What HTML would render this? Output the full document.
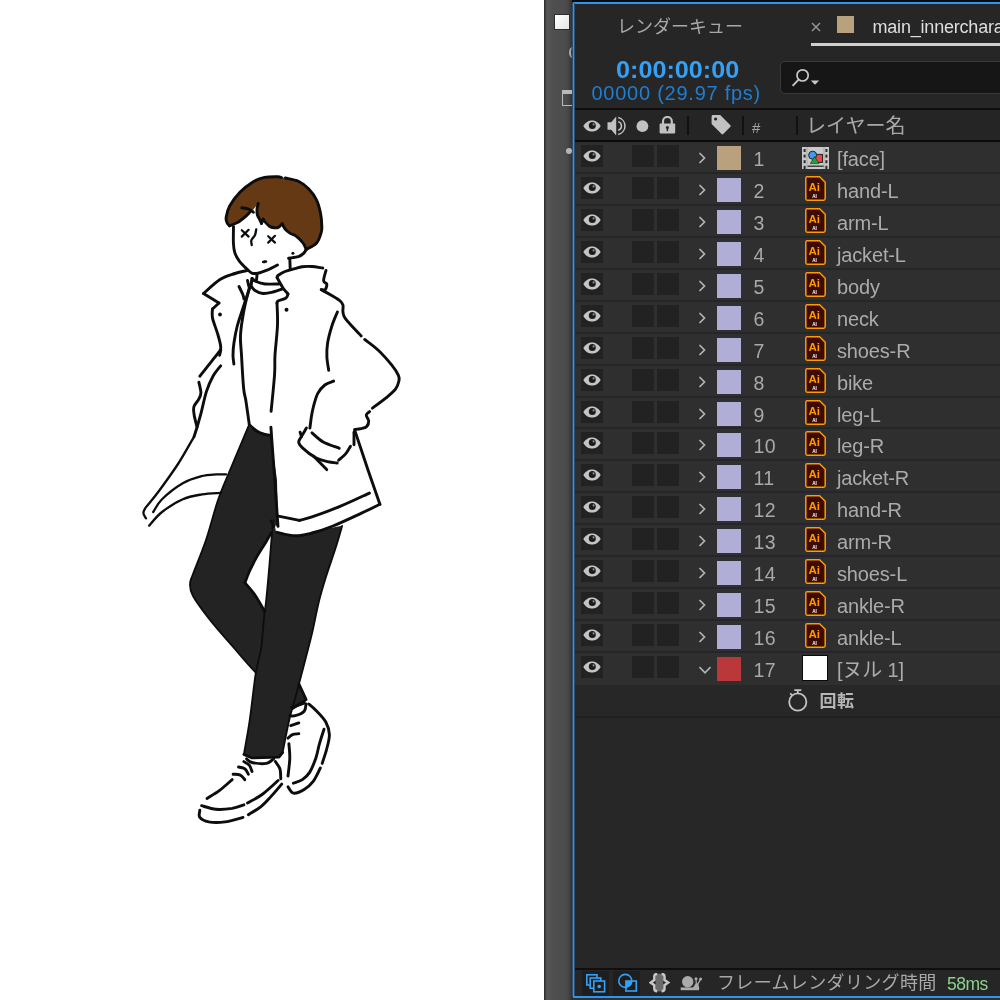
<!DOCTYPE html>
<html lang="ja"><head><meta charset="utf-8"><title>After Effects timeline</title>
<style>
html,body{margin:0;padding:0;}
body{width:1000px;height:1000px;overflow:hidden;background:#fff;position:relative;font-family:"Liberation Sans","Noto Sans CJK JP",sans-serif;}
#canvas{position:absolute;left:0;top:0;width:544px;height:1000px;background:#fff;overflow:hidden;}
#canvas svg{position:absolute;left:0;top:0;}
#strip{position:absolute;left:544px;top:0;width:29px;height:1000px;background:linear-gradient(90deg,#2f2f2f 0px,#333 1px,#545454 2.5px,#555 5px,#4f4f4f 8px,#4d4d4d 20px,#474747 24px,#383838 27px,#2a2a2a 28.5px);}
#strip .sq{position:absolute;left:10px;top:14px;width:14px;height:14px;background:linear-gradient(135deg,#fff,#e4e4e4);border:1px solid #2c2c2c;box-sizing:content-box;}
#strip .paren{position:absolute;left:24.5px;top:47px;width:8px;height:11px;border-radius:50%;border-left:2px solid #a9a9a9;box-sizing:border-box;}
#strip .box{position:absolute;left:18px;top:90px;width:12px;height:16px;border:1.5px solid #b9b9b9;border-top:4px solid #b9b9b9;box-sizing:border-box;}
#strip .dot{position:absolute;left:21.5px;top:148px;width:6px;height:6px;border-radius:50%;background:#b5b5b5;}
#panel{position:absolute;left:572px;top:0;width:428px;height:1000px;background:#262626;overflow:hidden;will-change:transform;}
#panel .abs{position:absolute;}
#topblack{position:absolute;left:0;top:0;width:428px;height:2px;background:#0c0c0c;}
#bl-top{position:absolute;left:1px;top:2px;width:427px;height:2px;background:#2e93f3;}
#bl-left{position:absolute;left:0px;top:3px;width:3px;height:994px;background:linear-gradient(90deg,#2b5177 0 1px,#2e93f3 1px 2px,#294f75 2px 3px);}
#bl-bot{position:absolute;left:1px;top:996px;width:427px;height:2px;background:#2e93f3;}
#below{position:absolute;left:0;top:998px;width:428px;height:2px;background:#303030;}
.tab1{position:absolute;left:45px;top:14px;font-size:18px;line-height:26px;color:#a8a8a8;white-space:nowrap;letter-spacing:0;}
.tabx{position:absolute;left:238px;top:21px;}
.tabsq{position:absolute;left:265px;top:16px;width:17px;height:17px;background:#b8a17c;}
.tab2{position:absolute;left:300.5px;top:14px;font-size:18px;line-height:26px;color:#dedede;white-space:nowrap;letter-spacing:-0.2px;}
.tabul{position:absolute;left:239px;top:43px;width:200px;height:3px;background:#cfcfcf;}
.tc{position:absolute;left:43.5px;top:55px;font-size:24px;line-height:30px;font-weight:bold;color:#34a0f6;white-space:nowrap;transform:scaleX(1.05);transform-origin:0 0;}
.fps{position:absolute;left:19.5px;top:81px;font-size:20px;line-height:24px;color:#1e7ed4;white-space:nowrap;letter-spacing:0.75px;}
.search{position:absolute;left:207.5px;top:61px;width:240px;height:33px;box-sizing:border-box;background:#161616;border:1px solid #393939;border-radius:5px;}
.hline1{position:absolute;left:3px;top:108px;width:425px;height:2px;background:#0e0e0e;}
.hdr{position:absolute;left:3px;top:110px;width:425px;height:30px;background:#252525;}
.hline2{position:absolute;left:3px;top:140px;width:425px;height:2px;background:#0a0a0a;}
.hsep{position:absolute;top:116px;width:2px;height:19px;background:#111;}
.hnum{position:absolute;left:180px;top:116px;font-size:15px;line-height:24px;color:#a5a5a5;}
.hname{position:absolute;left:234px;top:112px;font-size:20px;line-height:28px;color:#a9a9a9;white-space:nowrap;}
.row{position:absolute;left:3px;width:425px;height:32px;background:#2f2f2f;box-shadow:inset 0 -2px 0 #262626;}
.cell{position:absolute;top:3px;width:22px;height:22px;background:#222;}
.c1{left:6px;}.c3{left:57px;}.c4{left:82px;}
.eye{position:absolute;left:2px;top:5px;width:18px;height:12px;}
.chev{position:absolute;left:121px;top:10px;width:12px;height:12px;}
.lab{position:absolute;left:142px;top:3.5px;width:24px;height:24px;}
.num{position:absolute;left:178.5px;top:3px;font-size:19.5px;letter-spacing:0.4px;line-height:28px;color:#a9a9a9;white-space:nowrap;}
.ai{position:absolute;left:230px;top:2px;width:21px;height:25px;}
.ait{font-family:"Liberation Sans",sans-serif;font-weight:bold;font-size:11.5px;fill:#ff9a00;text-anchor:middle;}
.ais{font-family:"Liberation Sans",sans-serif;font-weight:bold;font-size:4.6px;fill:#fff;text-anchor:middle;}
.comp{position:absolute;left:226.5px;top:5px;width:27px;height:22px;}
.nullico{position:absolute;left:227px;top:2px;width:24px;height:24px;background:#fff;border:1.5px solid #0a0a0a;}
.name{position:absolute;left:262px;top:3px;font-size:20px;line-height:28px;color:#ababab;white-space:nowrap;letter-spacing:-0.15px;}
.prop{position:absolute;left:3px;top:685px;width:425px;height:31px;background:#272727;border-bottom:2px solid #1f1f1f;}
.sw{position:absolute;left:212.5px;top:2.5px;width:20px;height:24px;}
.pname{position:absolute;left:244.5px;top:3.5px;font-size:17px;line-height:26px;font-weight:bold;color:#b6b6b6;white-space:nowrap;letter-spacing:0.6px;font-family:"Liberation Sans","Noto Sans CJK JP",sans-serif;}
#empty{position:absolute;left:3px;top:718px;width:425px;height:250px;background:#272727;}
.bline{position:absolute;left:3px;top:967.5px;width:425px;height:2px;background:#0f0f0f;}
.bbar{position:absolute;left:3px;top:969.5px;width:425px;height:26.5px;background:#262626;}
.bbtn{position:absolute;top:971px;height:25px;width:27px;background:#1e1e1e;}
.btxt{position:absolute;left:145px;top:971px;font-size:18px;line-height:24px;color:#a8a8a8;white-space:nowrap;letter-spacing:0.35px;}
.bms{position:absolute;left:375px;top:971.5px;font-size:17.5px;line-height:24px;color:#8cd08c;white-space:nowrap;letter-spacing:-0.5px;}

</style></head>
<body>
<div id="canvas">
<svg width="544" height="1000" viewBox="0 0 544 1000">
<path d="M248.4 426.4 C247.3 428.9 245.2 434.0 242.0 441.6 C238.8 449.2 233.2 462.3 229.2 472.0 C225.2 481.7 221.9 488.7 218.0 500.0 C214.1 511.3 210.2 527.7 206.0 540.0 C201.8 552.3 195.7 566.7 193.0 574.0 C190.3 581.3 190.0 580.3 190.0 584.0 C190.0 587.7 189.7 590.0 193.0 596.0 C196.3 602.0 203.2 611.3 210.0 620.0 C216.8 628.7 228.0 641.0 234.0 648.0 C240.0 655.0 242.3 657.8 246.0 662.0 C249.7 666.2 254.3 671.2 256.0 673.0 L259 665 L261.4 646.8 L264.8 611.6 L260 603.2 L254 593.6 L245 582.8 L249.2 572 L256.4 557.6 L266 542 L271.4 532.4 L272.6 525 L278 526 L277 480 L272.4 448 L270.8 435.2 L258 432 Z" fill="#232323" stroke="none"/>
<path d="M298.0 680.0 L306.2 699.6 L292.4 708.6 L289.0 708.0Z" fill="#232323" stroke="none"/>
<path d="M273.6 520.5 C273.4 521.4 273.1 521.4 272.6 526.0 C272.1 530.6 271.5 539.5 270.8 548.0 C270.1 556.5 269.2 567.8 268.4 576.8 C267.6 585.8 266.7 595.5 266.0 602.0 C265.3 608.5 265.0 608.5 264.2 616.0 C263.4 623.5 262.3 639.7 261.4 646.8 C260.5 653.9 259.8 653.8 258.8 658.8 C257.8 663.8 256.7 666.4 255.2 676.8 C253.7 687.2 251.5 708.1 249.6 721.0 C247.7 733.9 244.8 748.8 243.9 754.4 L252 758 L279 757.1 L282.6 752.6 C283.7 747.3 287.0 729.8 289.0 721.0 C291.0 712.2 293.0 706.2 294.8 699.6 C296.6 693.0 297.6 689.2 299.6 681.6 C301.6 674.0 304.6 662.6 306.8 654.0 C309.0 645.4 310.8 638.7 312.8 630.0 C314.8 621.3 316.6 610.9 318.8 602.0 C321.0 593.1 323.2 585.8 326.0 576.8 C328.8 567.8 332.9 556.5 335.6 548.0 C338.3 539.5 341.1 529.5 342.2 525.8 L320 530 L302 535.4 L287.6 535.4 L276.2 532.4 Z" fill="#232323" stroke="none"/>
<path d="M229.4 225.8 C229.0 225.2 227.5 224.0 227.0 222.5 C226.5 221.0 225.7 219.8 226.2 217.0 C226.7 214.2 227.5 209.9 229.8 205.8 C232.1 201.7 236.1 196.3 239.9 192.3 C243.8 188.3 248.8 184.4 252.9 181.9 C257.0 179.4 260.5 178.3 264.6 177.4 C268.7 176.5 274.1 176.6 277.6 176.7 C281.1 176.8 281.9 177.2 285.4 178.0 C288.9 178.8 294.5 179.5 298.4 181.3 C302.3 183.1 305.8 185.9 308.8 189.0 C311.8 192.1 314.7 196.1 316.6 200.1 C318.6 204.1 319.6 208.8 320.5 213.1 C321.4 217.4 321.7 222.8 321.8 226.1 C321.9 229.3 322.1 229.8 321.2 232.6 C320.3 235.4 319.1 240.2 316.6 243.0 C314.1 245.8 307.9 248.4 306.2 249.5L306.2 249.5 C305.7 248.4 304.7 245.3 303.0 243.0 C301.3 240.7 297.9 237.5 295.8 235.9 C293.7 234.3 291.9 234.5 290.2 233.4 C288.5 232.3 286.7 231.0 285.4 229.4 C284.1 227.8 282.7 224.7 282.2 223.8L282.2 223.8 C281.5 224.4 279.5 226.7 278.2 227.4 C276.9 228.1 275.7 228.0 274.2 227.8 C272.7 227.6 271.0 227.3 269.4 226.2 C267.8 225.1 265.7 222.6 264.6 221.4 C263.5 220.2 263.5 218.7 263.0 219.0 C262.5 219.3 261.7 222.7 261.4 223.4L261.4 223.4 C261.1 222.8 260.5 221.2 259.8 219.8 C259.1 218.4 257.9 216.7 257.4 215.0 C256.9 213.3 256.9 211.3 257.0 209.4 C257.1 207.5 258.0 204.4 258.2 203.4L257.5 204.5 C256.8 205.3 254.6 208.2 253.4 209.4 C252.2 210.6 251.5 210.6 250.2 211.8 C248.9 213.0 247.5 214.8 245.4 216.6 C243.3 218.4 240.1 221.1 237.4 222.6 C234.7 224.1 230.7 225.3 229.4 225.8Z" fill="#643913" stroke="none"/>
<path d="M229.4 225.8 C229.0 225.2 227.5 224.0 227.0 222.5 C226.5 221.0 225.7 219.8 226.2 217.0 C226.7 214.2 227.5 209.9 229.8 205.8 C232.1 201.7 236.1 196.3 239.9 192.3 C243.8 188.3 248.8 184.4 252.9 181.9 C257.0 179.4 260.5 178.3 264.6 177.4 C268.7 176.5 274.8 176.7 277.6 176.7 C280.4 176.7 280.9 177.4 281.5 177.6" fill="none" stroke="#0d0d0d" stroke-width="2.9" stroke-linecap="round" stroke-linejoin="round"/>
<path d="M285.4 178.0 C287.6 178.6 294.5 179.5 298.4 181.3 C302.3 183.1 305.8 185.9 308.8 189.0 C311.8 192.1 314.7 196.1 316.6 200.1 C318.6 204.1 319.6 208.8 320.5 213.1 C321.4 217.4 321.7 222.8 321.8 226.1 C321.9 229.3 322.1 229.8 321.2 232.6 C320.3 235.4 319.1 240.2 316.6 243.0 C314.1 245.8 307.9 248.4 306.2 249.5" fill="none" stroke="#0d0d0d" stroke-width="2.9" stroke-linecap="round" stroke-linejoin="round"/>
<path d="M306.2 249.5 C305.7 248.4 304.7 245.3 303.0 243.0 C301.3 240.7 297.9 237.5 295.8 235.9 C293.7 234.3 291.9 234.5 290.2 233.4 C288.5 232.3 286.7 231.0 285.4 229.4 C284.1 227.8 282.7 224.7 282.2 223.8" fill="none" stroke="#0d0d0d" stroke-width="2.9" stroke-linecap="round" stroke-linejoin="round"/>
<path d="M282.2 223.8 C281.5 224.4 279.5 226.7 278.2 227.4 C276.9 228.1 275.7 228.0 274.2 227.8 C272.7 227.6 271.0 227.3 269.4 226.2 C267.8 225.1 265.7 222.6 264.6 221.4 C263.5 220.2 263.5 218.7 263.0 219.0 C262.5 219.3 261.7 222.7 261.4 223.4" fill="none" stroke="#0d0d0d" stroke-width="2.9" stroke-linecap="round" stroke-linejoin="round"/>
<path d="M261.4 223.4 C261.1 222.8 260.5 221.2 259.8 219.8 C259.1 218.4 257.9 216.7 257.4 215.0 C256.9 213.3 256.9 211.3 257.0 209.4 C257.1 207.5 258.0 204.4 258.2 203.4" fill="none" stroke="#0d0d0d" stroke-width="2.9" stroke-linecap="round" stroke-linejoin="round"/>
<path d="M229.4 225.8 C230.7 225.3 234.7 224.1 237.4 222.6 C240.1 221.1 243.3 218.4 245.4 216.6 C247.5 214.8 249.4 212.6 250.2 211.8" fill="none" stroke="#0d0d0d" stroke-width="2.9" stroke-linecap="round" stroke-linejoin="round"/>
<path d="M241.8 207.8 C242.9 208.0 246.7 208.3 248.6 209.0 C250.5 209.7 252.6 211.7 253.4 212.2" fill="none" stroke="#0d0d0d" stroke-width="2.9" stroke-linecap="round" stroke-linejoin="round"/>
<path d="M233.5 226.6 C233.5 229.3 233.2 238.7 233.4 243.0 C233.6 247.3 233.8 249.5 234.8 252.6 C235.8 255.7 237.4 258.6 239.5 261.4 C241.6 264.2 245.1 267.4 247.3 269.4 C249.5 271.4 250.6 272.7 252.5 273.3 C254.4 273.9 256.6 273.5 259.0 273.0 C261.4 272.5 263.9 271.5 267.0 270.2 C270.1 268.9 275.7 265.9 277.4 265.0" fill="none" stroke="#0d0d0d" stroke-width="2.9" stroke-linecap="round" stroke-linejoin="round"/>
<path d="M241.8 230.2 L248.6 236.6" fill="none" stroke="#0d0d0d" stroke-width="2.2" stroke-linecap="round" stroke-linejoin="round"/>
<path d="M248.6 229.8 L241.8 236.6" fill="none" stroke="#0d0d0d" stroke-width="2.2" stroke-linecap="round" stroke-linejoin="round"/>
<path d="M268.2 236.2 L275.0 242.6" fill="none" stroke="#0d0d0d" stroke-width="2.2" stroke-linecap="round" stroke-linejoin="round"/>
<path d="M275.0 235.8 L268.2 242.6" fill="none" stroke="#0d0d0d" stroke-width="2.2" stroke-linecap="round" stroke-linejoin="round"/>
<path d="M256.2 229.4 C256.0 230.3 255.8 233.2 255.0 235.0 C254.2 236.8 251.9 238.5 251.4 240.2 C250.9 241.9 251.7 244.2 251.8 245.0" fill="none" stroke="#0d0d0d" stroke-width="2.3" stroke-linecap="round" stroke-linejoin="round"/>
<ellipse cx="264.6" cy="261.7" rx="2.8" ry="1.5" fill="#0d0d0d" transform="rotate(-8 264.6 261.7)"/>
<path d="M306.2 249.5 C305.8 250.2 304.9 252.2 303.6 253.4 C302.3 254.6 300.9 255.9 298.4 256.7 C295.9 257.5 290.2 257.9 288.6 258.2" fill="none" stroke="#0d0d0d" stroke-width="2.9" stroke-linecap="round" stroke-linejoin="round"/>
<circle cx="292.9" cy="253.2" r="1.5" fill="#0d0d0d"/>
<path d="M289.8 258.2 L290.2 268.6" fill="none" stroke="#0d0d0d" stroke-width="2.9" stroke-linecap="round" stroke-linejoin="round"/>
<path d="M257.0 275.0 L256.5 280.0" fill="none" stroke="#0d0d0d" stroke-width="2.9" stroke-linecap="round" stroke-linejoin="round"/>
<path d="M252.0 278.5 C252.7 279.0 253.8 280.6 256.0 281.5 C258.2 282.4 261.2 283.6 265.0 284.0 C268.8 284.4 276.7 284.0 279.0 284.0" fill="none" stroke="#0d0d0d" stroke-width="2.9" stroke-linecap="round" stroke-linejoin="round"/>
<path d="M251.0 286.0 C251.7 286.8 253.0 289.2 255.0 290.5 C257.0 291.8 260.0 293.2 263.0 293.5 C266.0 293.8 269.8 292.8 273.0 292.0 C276.2 291.2 280.5 289.5 282.0 289.0" fill="none" stroke="#0d0d0d" stroke-width="2.9" stroke-linecap="round" stroke-linejoin="round"/>
<path d="M252.0 278.5 L251.0 286.0" fill="none" stroke="#0d0d0d" stroke-width="2.9" stroke-linecap="round" stroke-linejoin="round"/>
<path d="M247.0 270.5 C245.0 271.0 239.5 272.0 235.0 273.5 C230.5 275.0 225.2 276.2 220.0 279.5 C214.8 282.8 206.2 291.2 203.5 293.5" fill="none" stroke="#0d0d0d" stroke-width="2.9" stroke-linecap="round" stroke-linejoin="round"/>
<path d="M203.5 293.5 L219.0 303.0" fill="none" stroke="#0d0d0d" stroke-width="2.9" stroke-linecap="round" stroke-linejoin="round"/>
<path d="M219.0 303.0 L212.5 309.0" fill="none" stroke="#0d0d0d" stroke-width="2.9" stroke-linecap="round" stroke-linejoin="round"/>
<path d="M212.5 309.0 C212.4 309.8 212.1 312.2 212.2 314.0 C212.3 315.8 212.0 316.5 213.0 320.0 C214.0 323.5 216.8 330.8 218.0 335.0 C219.2 339.2 220.1 342.5 220.5 345.0 C220.9 347.5 220.8 348.3 220.7 350.0 C220.5 351.7 219.8 354.4 219.6 355.3" fill="none" stroke="#0d0d0d" stroke-width="2.9" stroke-linecap="round" stroke-linejoin="round"/>
<path d="M220.4 350.0 C219.7 350.9 218.3 352.8 216.3 355.3 C214.3 357.8 211.3 361.7 208.6 365.2 C205.8 368.7 201.3 374.4 199.8 376.2" fill="none" stroke="#0d0d0d" stroke-width="2.9" stroke-linecap="round" stroke-linejoin="round"/>
<circle cx="220" cy="314.5" r="1.9" fill="#0d0d0d"/>
<path d="M220.7 365.8 C219.4 367.5 215.4 371.9 213.0 376.2 C210.6 380.5 208.4 385.4 206.4 391.6 C204.4 397.8 202.6 407.4 200.9 413.6 C199.2 419.8 197.7 425.1 196.5 429.0 C195.3 432.9 194.4 435.5 194.0 436.8" fill="none" stroke="#0d0d0d" stroke-width="2.9" stroke-linecap="round" stroke-linejoin="round"/>
<path d="M198.9 382.3 C199.2 384.0 200.9 389.9 200.9 392.7 C200.9 395.5 199.9 396.9 198.7 399.3 C197.5 401.7 194.5 404.2 193.8 407.0 C193.1 409.8 193.8 412.5 194.3 415.8 C194.8 419.1 196.6 425.0 197.0 426.8" fill="none" stroke="#0d0d0d" stroke-width="2.9" stroke-linecap="round" stroke-linejoin="round"/>
<path d="M252.5 279.0 C251.9 280.8 250.6 285.2 249.0 290.0 C247.4 294.8 245.0 301.8 243.0 308.0 C241.0 314.2 238.5 321.1 237.0 327.0 C235.5 332.9 234.6 338.5 233.9 343.2 C233.2 347.9 233.0 351.8 233.0 355.3 C233.0 358.8 233.8 362.6 233.9 364.1" fill="none" stroke="#0d0d0d" stroke-width="2.9" stroke-linecap="round" stroke-linejoin="round"/>
<path d="M239.0 286.5 C239.7 287.9 242.2 292.9 243.0 295.0 C243.8 297.1 243.8 298.3 244.0 299.0" fill="none" stroke="#0d0d0d" stroke-width="2.9" stroke-linecap="round" stroke-linejoin="round"/>
<path d="M247.5 280.5 L249.0 287.0" fill="none" stroke="#0d0d0d" stroke-width="2.9" stroke-linecap="round" stroke-linejoin="round"/>
<path d="M249.0 289.0 C248.2 292.5 245.4 302.3 244.0 310.0 C242.6 317.7 240.9 327.5 240.5 335.0 C240.1 342.5 241.0 346.2 241.5 355.0 C242.0 363.8 242.8 380.2 243.6 388.0 C244.3 395.8 245.1 395.4 246.0 401.5 C246.9 407.6 248.8 420.8 249.3 424.6" fill="none" stroke="#0d0d0d" stroke-width="2.9" stroke-linecap="round" stroke-linejoin="round"/>
<path d="M249.3 425.0 C250.6 426.0 254.6 429.7 257.0 431.2 C259.4 432.7 261.7 433.5 264.0 434.2 C266.3 434.9 269.7 435.2 270.8 435.4" fill="none" stroke="#0d0d0d" stroke-width="2.9" stroke-linecap="round" stroke-linejoin="round"/>
<path d="M277.2 277.5 C277.3 277.2 276.7 276.5 278.0 275.5 C279.3 274.5 282.2 272.6 285.0 271.5 C287.8 270.4 292.2 269.4 295.0 268.6 C297.8 267.8 299.2 267.1 302.0 266.7 C304.8 266.3 308.5 266.3 312.0 266.5 C315.5 266.7 321.0 267.8 322.8 268.0" fill="none" stroke="#0d0d0d" stroke-width="2.9" stroke-linecap="round" stroke-linejoin="round"/>
<path d="M326.0 270.4 C325.6 272.1 323.5 278.5 323.6 280.8 C323.7 283.1 326.5 282.5 326.8 284.0 C327.1 285.5 326.1 288.7 325.2 289.6 C324.3 290.5 321.9 289.6 321.2 289.6" fill="none" stroke="#0d0d0d" stroke-width="2.9" stroke-linecap="round" stroke-linejoin="round"/>
<path d="M277.0 277.5 C278.0 279.2 281.2 285.2 283.0 288.0 C284.8 290.8 287.2 293.0 288.0 294.0" fill="none" stroke="#0d0d0d" stroke-width="2.9" stroke-linecap="round" stroke-linejoin="round"/>
<path d="M288.0 294.0 C287.7 294.7 287.7 296.8 286.0 298.0 C284.3 299.2 279.5 300.2 278.0 301.0 C276.5 301.8 277.2 302.7 277.0 303.0" fill="none" stroke="#0d0d0d" stroke-width="2.9" stroke-linecap="round" stroke-linejoin="round"/>
<path d="M277.0 303.0 C277.1 306.7 277.8 316.3 277.5 325.0 C277.2 333.7 275.5 346.8 275.0 355.0 C274.5 363.2 275.2 364.6 274.6 374.0 C274.0 383.4 271.7 405.2 271.1 411.4" fill="none" stroke="#0d0d0d" stroke-width="2.9" stroke-linecap="round" stroke-linejoin="round"/>
<path d="M270.9 427.2 C271.1 430.7 271.8 439.2 272.4 448.0 C273.0 456.8 274.0 468.8 274.8 480.0 C275.6 491.2 276.7 507.5 277.2 515.2 C277.7 522.9 277.9 524.5 278.0 526.4" fill="none" stroke="#0d0d0d" stroke-width="2.9" stroke-linecap="round" stroke-linejoin="round"/>
<circle cx="286.5" cy="309.7" r="2" fill="#0d0d0d"/>
<path d="M321.3 289.8 C322.8 290.6 327.2 292.8 330.4 294.7 C333.5 296.6 338.1 299.2 340.2 301.0 C342.3 302.8 342.5 303.3 343.0 305.2 C343.5 307.1 342.5 309.9 343.0 312.2 C343.5 314.5 342.8 315.2 345.8 319.2 C348.8 323.2 358.6 333.2 361.2 336.0" fill="none" stroke="#0d0d0d" stroke-width="2.9" stroke-linecap="round" stroke-linejoin="round"/>
<path d="M364.7 339.5 C366.9 341.2 373.4 345.7 378.0 350.0 C382.6 354.3 388.6 361.2 392.0 365.4 C395.4 369.6 397.1 372.6 398.3 375.2 C399.5 377.8 399.5 378.5 399.0 380.8 C398.5 383.1 397.6 386.4 395.5 389.2 C393.4 392.0 390.2 394.5 386.4 397.6 C382.5 400.8 374.7 406.4 372.4 408.1" fill="none" stroke="#0d0d0d" stroke-width="2.9" stroke-linecap="round" stroke-linejoin="round"/>
<path d="M369.6 411.6 C369.1 412.2 366.5 413.4 366.3 415.0 C366.1 416.6 368.6 419.1 368.7 421.0 C368.8 422.9 367.9 425.3 366.6 426.6 C365.3 427.9 363.0 428.2 361.0 428.7 C359.0 429.2 355.8 429.3 354.7 429.4" fill="none" stroke="#0d0d0d" stroke-width="2.9" stroke-linecap="round" stroke-linejoin="round"/>
<path d="M337.4 311.9 C336.5 314.3 333.4 321.0 331.8 326.2 C330.2 331.4 328.4 337.9 327.6 343.0 C326.8 348.1 326.7 352.4 326.9 357.0 C327.1 361.6 328.4 368.1 328.7 370.3" fill="none" stroke="#0d0d0d" stroke-width="2.9" stroke-linecap="round" stroke-linejoin="round"/>
<path d="M333.6 381.1 C332.1 381.8 327.4 382.9 324.8 385.0 C322.2 387.1 319.7 389.9 317.8 393.4 C315.9 396.9 314.7 402.2 313.6 406.0 C312.6 409.8 312.1 412.3 311.5 416.0 C310.9 419.7 310.2 426.0 309.9 428.0" fill="none" stroke="#0d0d0d" stroke-width="2.9" stroke-linecap="round" stroke-linejoin="round"/>
<path d="M306.4 428.0 C305.6 429.4 302.8 434.1 301.5 436.4 C300.2 438.7 298.6 440.1 298.7 442.0 C298.8 443.9 299.3 444.9 302.2 447.6 C305.1 450.3 312.0 455.8 316.2 458.1 C320.4 460.4 323.9 460.8 327.4 461.6 C330.9 462.4 335.6 462.8 337.2 463.0" fill="none" stroke="#0d0d0d" stroke-width="2.9" stroke-linecap="round" stroke-linejoin="round"/>
<path d="M300.1 432.2 L301.5 436.6" fill="none" stroke="#0d0d0d" stroke-width="2.9" stroke-linecap="round" stroke-linejoin="round"/>
<path d="M313.4 456.0 L326.7 469.6" fill="none" stroke="#0d0d0d" stroke-width="2.9" stroke-linecap="round" stroke-linejoin="round"/>
<path d="M312.0 432.9 C313.9 434.4 318.6 439.4 323.2 442.0 C327.8 444.6 336.6 447.2 339.3 448.3" fill="none" stroke="#0d0d0d" stroke-width="2.9" stroke-linecap="round" stroke-linejoin="round"/>
<path d="M338.6 460.2 C339.8 459.1 343.6 456.2 345.6 453.9 C347.6 451.6 349.7 447.5 350.5 446.2" fill="none" stroke="#0d0d0d" stroke-width="2.9" stroke-linecap="round" stroke-linejoin="round"/>
<path d="M354.0 432.2 L354.0 444.8" fill="none" stroke="#0d0d0d" stroke-width="2.9" stroke-linecap="round" stroke-linejoin="round"/>
<path d="M354.7 430.1 L368.0 470.0 L379.9 504.3" fill="none" stroke="#0d0d0d" stroke-width="2.9" stroke-linecap="round" stroke-linejoin="round"/>
<path d="M379.9 504.3 C376.8 505.8 368.8 509.8 361.0 513.4 C353.2 517.0 341.2 522.7 333.0 526.0 C324.8 529.3 318.3 531.4 312.0 533.0 C305.7 534.6 301.0 535.9 295.2 535.8 C289.4 535.7 280.0 532.9 277.0 532.3" fill="none" stroke="#0d0d0d" stroke-width="2.9" stroke-linecap="round" stroke-linejoin="round"/>
<path d="M369.4 493.1 C364.5 495.3 349.6 502.4 340.0 506.4 C330.4 510.4 318.8 514.6 312.0 516.9 C305.2 519.2 301.5 519.8 299.4 520.4" fill="none" stroke="#0d0d0d" stroke-width="2.9" stroke-linecap="round" stroke-linejoin="round"/>
<path d="M299.4 520.4 L278.4 516.2" fill="none" stroke="#0d0d0d" stroke-width="2.9" stroke-linecap="round" stroke-linejoin="round"/>
<path d="M194.0 436.8 C191.3 441.3 183.9 454.9 178.0 464.0 C172.1 473.1 164.1 484.0 158.8 491.2 C153.5 498.4 148.6 503.6 146.0 507.2 C143.4 510.8 143.4 511.1 143.4 513.0 C143.4 514.9 145.6 517.5 146.0 518.4" fill="none" stroke="#0d0d0d" stroke-width="2.3" stroke-linecap="round" stroke-linejoin="round"/>
<path d="M153.2 512.0 C154.7 509.9 157.1 504.0 162.0 499.2 C166.9 494.4 176.1 487.1 182.8 483.2 C189.5 479.3 196.4 477.5 202.0 476.0 C207.6 474.5 212.4 474.7 216.4 474.4 C220.4 474.1 224.4 474.4 226.0 474.4" fill="none" stroke="#0d0d0d" stroke-width="2.3" stroke-linecap="round" stroke-linejoin="round"/>
<path d="M149.2 525.6 C151.3 523.3 156.4 516.4 162.0 512.0 C167.6 507.6 176.1 502.1 182.8 499.2 C189.5 496.3 195.6 495.5 202.0 494.4 C208.4 493.3 218.0 493.1 221.2 492.8" fill="none" stroke="#0d0d0d" stroke-width="2.3" stroke-linecap="round" stroke-linejoin="round"/>
<path d="M248.4 426.4 C247.3 428.9 245.2 434.0 242.0 441.6 C238.8 449.2 233.2 462.3 229.2 472.0 C225.2 481.7 221.9 488.7 218.0 500.0 C214.1 511.3 210.2 527.7 206.0 540.0 C201.8 552.3 195.7 566.7 193.0 574.0 C190.3 581.3 190.0 580.3 190.0 584.0 C190.0 587.7 189.7 590.0 193.0 596.0 C196.3 602.0 203.2 611.3 210.0 620.0 C216.8 628.7 228.0 641.0 234.0 648.0 C240.0 655.0 242.3 657.8 246.0 662.0 C249.7 666.2 254.3 671.2 256.0 673.0" fill="none" stroke="#0d0d0d" stroke-width="1.8" stroke-linecap="round" stroke-linejoin="round"/>
<path d="M271.4 532.4 C270.5 534.0 268.5 537.8 266.0 542.0 C263.5 546.2 259.2 552.6 256.4 557.6 C253.6 562.6 251.1 567.8 249.2 572.0 C247.3 576.2 245.7 581.0 245.0 582.8" fill="none" stroke="#0d0d0d" stroke-width="2.7" stroke-linecap="round" stroke-linejoin="round"/>
<path d="M245.0 582.8 C246.5 584.6 251.5 590.2 254.0 593.6 C256.5 597.0 258.2 600.2 260.0 603.2 C261.8 606.2 264.0 610.2 264.8 611.6" fill="none" stroke="#0d0d0d" stroke-width="2.7" stroke-linecap="round" stroke-linejoin="round"/>
<path d="M273.6 520.5 C273.4 521.4 273.1 521.4 272.6 526.0 C272.1 530.6 271.5 539.5 270.8 548.0 C270.1 556.5 269.2 567.8 268.4 576.8 C267.6 585.8 266.7 595.5 266.0 602.0 C265.3 608.5 265.0 608.5 264.2 616.0 C263.4 623.5 262.3 639.7 261.4 646.8 C260.5 653.9 259.8 653.8 258.8 658.8 C257.8 663.8 256.7 666.4 255.2 676.8 C253.7 687.2 251.5 708.1 249.6 721.0 C247.7 733.9 244.8 748.8 243.9 754.4" fill="none" stroke="#0d0d0d" stroke-width="1.8" stroke-linecap="round" stroke-linejoin="round"/>
<path d="M282.6 752.6 C283.7 747.3 287.0 729.8 289.0 721.0 C291.0 712.2 293.0 706.2 294.8 699.6 C296.6 693.0 297.6 689.2 299.6 681.6 C301.6 674.0 304.6 662.6 306.8 654.0 C309.0 645.4 310.8 638.7 312.8 630.0 C314.8 621.3 316.6 610.9 318.8 602.0 C321.0 593.1 323.2 585.8 326.0 576.8 C328.8 567.8 332.9 556.5 335.6 548.0 C338.3 539.5 341.1 529.5 342.2 525.8" fill="none" stroke="#0d0d0d" stroke-width="1.8" stroke-linecap="round" stroke-linejoin="round"/>
<path d="M243.9 754.4 L252.0 758.0 L279.0 757.1 L282.6 752.6" fill="none" stroke="#0d0d0d" stroke-width="2.7" stroke-linecap="round" stroke-linejoin="round"/>
<path d="M270.8 520.8 L274.0 526.4" fill="none" stroke="#0d0d0d" stroke-width="2.7" stroke-linecap="round" stroke-linejoin="round"/>
<path d="M299.0 684.0 L306.2 699.6 L292.4 708.6" fill="none" stroke="#0d0d0d" stroke-width="2.7" stroke-linecap="round" stroke-linejoin="round"/>
<path d="M291.6 707.6 L304.2 703.1" fill="none" stroke="#0d0d0d" stroke-width="2.9" stroke-linecap="round" stroke-linejoin="round"/>
<path d="M306.0 704.0 C305.7 705.2 306.0 709.2 304.2 711.2 C302.4 713.2 297.6 715.0 295.2 715.7 C292.8 716.5 290.7 715.7 289.8 715.7" fill="none" stroke="#0d0d0d" stroke-width="2.9" stroke-linecap="round" stroke-linejoin="round"/>
<path d="M308.7 704.0 C310.1 705.2 313.9 708.2 316.8 711.2 C319.7 714.2 323.7 718.1 325.8 722.0 C327.9 725.9 329.2 730.1 329.4 734.6 C329.5 739.1 327.9 744.2 326.7 749.0 C325.5 753.8 322.9 761.0 322.2 763.4" fill="none" stroke="#0d0d0d" stroke-width="2.9" stroke-linecap="round" stroke-linejoin="round"/>
<path d="M320.4 767.9 C319.2 770.1 315.9 777.8 313.2 781.4 C310.5 785.0 307.5 787.5 304.2 789.5 C300.9 791.5 296.1 793.6 293.4 793.1 C290.7 792.6 288.9 787.8 288.0 786.8" fill="none" stroke="#0d0d0d" stroke-width="2.9" stroke-linecap="round" stroke-linejoin="round"/>
<path d="M324.0 729.2 C323.2 731.6 320.9 738.8 319.5 743.6 C318.1 748.4 317.5 753.2 315.9 758.0 C314.2 762.8 311.9 768.8 309.6 772.4 C307.4 776.0 305.1 777.8 302.4 779.6 C299.7 781.4 294.9 782.6 293.4 783.2" fill="none" stroke="#0d0d0d" stroke-width="2.9" stroke-linecap="round" stroke-linejoin="round"/>
<path d="M288.9 743.6 C289.0 746.0 289.9 752.6 289.8 758.0 C289.7 763.4 288.3 773.0 288.0 776.0" fill="none" stroke="#0d0d0d" stroke-width="2.9" stroke-linecap="round" stroke-linejoin="round"/>
<path d="M290.7 725.6 L298.8 722.9" fill="none" stroke="#0d0d0d" stroke-width="2.9" stroke-linecap="round" stroke-linejoin="round"/>
<path d="M288.0 738.2 C288.8 737.6 290.7 735.4 292.5 734.6 C294.3 733.9 297.8 733.9 298.8 733.7" fill="none" stroke="#0d0d0d" stroke-width="2.9" stroke-linecap="round" stroke-linejoin="round"/>
<path d="M246.6 758.9 C247.5 759.5 248.7 761.8 252.0 762.5 C255.3 763.2 262.8 764.0 266.4 763.4 C270.0 762.8 272.4 759.6 273.6 758.9" fill="none" stroke="#0d0d0d" stroke-width="2.9" stroke-linecap="round" stroke-linejoin="round"/>
<path d="M275.4 761.6 C276.1 762.8 279.0 765.9 279.9 768.8 C280.8 771.6 280.6 777.1 280.8 778.7" fill="none" stroke="#0d0d0d" stroke-width="2.9" stroke-linecap="round" stroke-linejoin="round"/>
<path d="M243.9 761.6 C244.8 762.2 248.0 763.6 249.3 765.2 C250.7 766.9 251.6 770.5 252.0 771.5" fill="none" stroke="#0d0d0d" stroke-width="2.9" stroke-linecap="round" stroke-linejoin="round"/>
<path d="M238.5 767.0 C239.6 767.3 243.2 767.6 244.8 768.8 C246.5 770.0 247.8 773.3 248.4 774.2" fill="none" stroke="#0d0d0d" stroke-width="2.9" stroke-linecap="round" stroke-linejoin="round"/>
<path d="M233.1 774.2 C234.3 774.4 238.4 774.2 240.3 775.1 C242.2 776.0 244.1 778.9 244.8 779.6" fill="none" stroke="#0d0d0d" stroke-width="2.9" stroke-linecap="round" stroke-linejoin="round"/>
<path d="M232.2 779.6 C230.1 781.4 223.8 787.2 219.6 790.4 C215.4 793.5 209.1 797.1 207.0 798.5" fill="none" stroke="#0d0d0d" stroke-width="2.9" stroke-linecap="round" stroke-linejoin="round"/>
<path d="M201.6 805.7 C204.0 806.3 210.9 808.8 216.0 809.3 C221.1 809.8 227.5 809.1 232.2 808.4 C236.8 807.6 241.9 805.4 243.9 804.8" fill="none" stroke="#0d0d0d" stroke-width="2.9" stroke-linecap="round" stroke-linejoin="round"/>
<path d="M247.5 803.0 C250.1 801.5 257.7 797.8 262.8 794.0 C267.9 790.2 275.6 782.8 278.1 780.5" fill="none" stroke="#0d0d0d" stroke-width="2.9" stroke-linecap="round" stroke-linejoin="round"/>
<path d="M199.8 810.2 C199.8 811.4 198.3 815.5 199.8 817.4 C201.3 819.3 204.6 821.1 208.8 821.9 C213.0 822.6 219.3 822.6 225.0 821.9 C230.7 821.1 240.0 818.1 243.0 817.4" fill="none" stroke="#0d0d0d" stroke-width="2.9" stroke-linecap="round" stroke-linejoin="round"/>
<path d="M248.4 814.7 C250.5 813.4 257.4 809.5 261.0 806.6 C264.6 803.8 266.6 801.4 270.0 797.6 C273.4 793.9 279.8 786.4 281.7 784.1" fill="none" stroke="#0d0d0d" stroke-width="2.9" stroke-linecap="round" stroke-linejoin="round"/>
</svg>
</div>
<div id="strip"><div class="sq"></div><div class="paren"></div><div class="box"></div><div class="dot"></div></div>
<div id="panel">
<div id="topblack"></div><div id="bl-top"></div><div id="bl-left"></div><div id="bl-bot"></div><div id="below"></div>
<div class="tab1">レンダーキュー</div>
<svg class="tabx" width="12" height="12" viewBox="0 0 12 12"><path d="M2 2 L10 10 M10 2 L2 10" stroke="#9a9a9a" stroke-width="1.4" fill="none"/></svg>
<div class="tabsq"></div>
<div class="tab2">main_innerchara</div>
<div class="tabul"></div>
<div class="tc">0:00:00:00</div>
<div class="fps">00000 (29.97 fps)</div>
<div class="search"><svg style="position:absolute;left:9px;top:6px" width="32" height="20" viewBox="0 0 32 20"><circle cx="12.6" cy="7.4" r="5.6" fill="none" stroke="#c8c8c8" stroke-width="1.7"/><path d="M8.6 11.6 L2.6 17.8" stroke="#c8c8c8" stroke-width="1.9" fill="none"/><path d="M20.8 12.4 h8.4 l-4.2 4.4 z" fill="#c8c8c8"/></svg></div>
<div class="hline1"></div><div class="hdr"></div><div class="hline2"></div>
<svg class="abs" style="left:11px;top:120px" width="18" height="12" viewBox="0 0 18 12"><path d="M0.3 6 C3 1.6 6 0.4 9 0.4 C12 0.4 15 1.6 17.7 6 C15 10.4 12 11.6 9 11.6 C6 11.6 3 10.4 0.3 6 Z" fill="#c4c4c4"/><circle cx="9.3" cy="5.6" r="3.5" fill="#1b1b1b"/><circle cx="10.6" cy="4.4" r="1.1" fill="#8a8a8a"/></svg>
<svg class="abs" style="left:35px;top:116px" width="21" height="20" viewBox="0 0 21 20"><path d="M0.5 6.2 H4.2 L9.2 0.6 V19.4 L4.2 13.8 H0.5 Z" fill="#c2c2c2"/><path d="M11.2 5.6 A4.6 4.6 0 0 1 11.2 14.4 M11.2 1.6 A8.6 8.6 0 0 1 11.2 18.4" fill="none" stroke="#c2c2c2" stroke-width="1.5"/></svg>
<svg class="abs" style="left:64px;top:120px" width="13" height="13" viewBox="0 0 13 13"><circle cx="6.4" cy="6.2" r="5.9" fill="#c2c2c2"/></svg>
<svg class="abs" style="left:87px;top:116px" width="17" height="18" viewBox="0 0 17 18"><path d="M4 8 V5.4 A4.4 4.4 0 0 1 12.8 5.4 V8" fill="none" stroke="#c2c2c2" stroke-width="2.2"/><rect x="0.6" y="7.6" width="15.6" height="9.8" rx="0.8" fill="#c2c2c2"/><circle cx="8.4" cy="11.4" r="1.5" fill="#252525"/><rect x="7.7" y="11.8" width="1.4" height="3.4" fill="#252525"/></svg>
<div class="hsep" style="left:115px"></div>
<svg class="abs" style="left:138px;top:114px" width="22" height="22" viewBox="0 0 22 22"><path d="M1.6 2.4 Q1.6 1 3 1 H10.2 L20.4 11.2 Q21.2 12 20.4 12.8 L13.2 20 Q12.4 20.8 11.6 20 L1.6 10 Z" fill="#c2c2c2"/><circle cx="5.6" cy="5" r="1.6" fill="#252525"/></svg>
<div class="hsep" style="left:170px"></div>
<div class="hnum">#</div>
<div class="hsep" style="left:224px"></div>
<div class="hname">レイヤー名</div>
<div class="row" style="top:142px;height:32px"><div class="cell c1"><svg class="eye" viewBox="0 0 18 12"><path d="M0.3 6 C3 1.6 6 0.4 9 0.4 C12 0.4 15 1.6 17.7 6 C15 10.4 12 11.6 9 11.6 C6 11.6 3 10.4 0.3 6 Z" fill="#c4c4c4"/><circle cx="9.3" cy="5.6" r="3.5" fill="#1b1b1b"/><circle cx="10.6" cy="4.4" r="1.1" fill="#8a8a8a"/></svg></div><div class="cell c3"></div><div class="cell c4"></div><svg class="chev" viewBox="0 0 12 12"><path d="M3.5 1 L8.5 6 L3.5 11" fill="none" stroke="#b4b4b4" stroke-width="1.7"/></svg><div class="lab" style="background:#b8a17c"></div><div class="num">1</div><svg class="comp" viewBox="0 0 27 22"><rect x="0" y="0" width="27" height="22" fill="#c9c9c9"/><g fill="#2b2b2b"><rect x="1.6" y="2" width="2" height="3"/><rect x="1.6" y="7.6" width="2" height="3"/><rect x="1.6" y="13.2" width="2" height="3"/><rect x="1.6" y="18.8" width="2" height="3.2"/><rect x="23.4" y="2" width="2" height="3"/><rect x="23.4" y="7.6" width="2" height="3"/><rect x="23.4" y="13.2" width="2" height="3"/><rect x="23.4" y="18.8" width="2" height="3.2"/></g><rect x="4.6" y="0" width="0.8" height="22" fill="#a0a0a0"/><rect x="21.6" y="0" width="0.8" height="22" fill="#a0a0a0"/><rect x="13.4" y="7.4" width="7" height="8" fill="#f04444" stroke="#222" stroke-width="1"/><circle cx="10.6" cy="8.2" r="4" fill="#3b9cf5" stroke="#222" stroke-width="1"/><path d="M12.6 9.4 L17 16.6 H8.2 Z" fill="#1fa338" stroke="#222" stroke-width="0.6"/><rect x="5.6" y="18.6" width="16" height="1.2" fill="#222"/></svg><div class="name">[face]</div></div>
<div class="row" style="top:174px;height:32px"><div class="cell c1"><svg class="eye" viewBox="0 0 18 12"><path d="M0.3 6 C3 1.6 6 0.4 9 0.4 C12 0.4 15 1.6 17.7 6 C15 10.4 12 11.6 9 11.6 C6 11.6 3 10.4 0.3 6 Z" fill="#c4c4c4"/><circle cx="9.3" cy="5.6" r="3.5" fill="#1b1b1b"/><circle cx="10.6" cy="4.4" r="1.1" fill="#8a8a8a"/></svg></div><div class="cell c3"></div><div class="cell c4"></div><svg class="chev" viewBox="0 0 12 12"><path d="M3.5 1 L8.5 6 L3.5 11" fill="none" stroke="#b4b4b4" stroke-width="1.7"/></svg><div class="lab" style="background:#b0aed6"></div><div class="num">2</div><svg class="ai" viewBox="0 0 21 25"><path d="M2.2 0.8 H14.6 L20.2 6.2 V22.6 Q20.2 24.2 18.6 24.2 H2.2 Q0.8 24.2 0.8 22.6 V2.4 Q0.8 0.8 2.2 0.8 Z" fill="#3c0b04" stroke="#ff9a00" stroke-width="1.5"/><text x="9.3" y="15" class="ait">Ai</text><text x="9.6" y="22.2" class="ais">AI</text></svg><div class="name">hand-L</div></div>
<div class="row" style="top:206px;height:32px"><div class="cell c1"><svg class="eye" viewBox="0 0 18 12"><path d="M0.3 6 C3 1.6 6 0.4 9 0.4 C12 0.4 15 1.6 17.7 6 C15 10.4 12 11.6 9 11.6 C6 11.6 3 10.4 0.3 6 Z" fill="#c4c4c4"/><circle cx="9.3" cy="5.6" r="3.5" fill="#1b1b1b"/><circle cx="10.6" cy="4.4" r="1.1" fill="#8a8a8a"/></svg></div><div class="cell c3"></div><div class="cell c4"></div><svg class="chev" viewBox="0 0 12 12"><path d="M3.5 1 L8.5 6 L3.5 11" fill="none" stroke="#b4b4b4" stroke-width="1.7"/></svg><div class="lab" style="background:#b0aed6"></div><div class="num">3</div><svg class="ai" viewBox="0 0 21 25"><path d="M2.2 0.8 H14.6 L20.2 6.2 V22.6 Q20.2 24.2 18.6 24.2 H2.2 Q0.8 24.2 0.8 22.6 V2.4 Q0.8 0.8 2.2 0.8 Z" fill="#3c0b04" stroke="#ff9a00" stroke-width="1.5"/><text x="9.3" y="15" class="ait">Ai</text><text x="9.6" y="22.2" class="ais">AI</text></svg><div class="name">arm-L</div></div>
<div class="row" style="top:238px;height:32px"><div class="cell c1"><svg class="eye" viewBox="0 0 18 12"><path d="M0.3 6 C3 1.6 6 0.4 9 0.4 C12 0.4 15 1.6 17.7 6 C15 10.4 12 11.6 9 11.6 C6 11.6 3 10.4 0.3 6 Z" fill="#c4c4c4"/><circle cx="9.3" cy="5.6" r="3.5" fill="#1b1b1b"/><circle cx="10.6" cy="4.4" r="1.1" fill="#8a8a8a"/></svg></div><div class="cell c3"></div><div class="cell c4"></div><svg class="chev" viewBox="0 0 12 12"><path d="M3.5 1 L8.5 6 L3.5 11" fill="none" stroke="#b4b4b4" stroke-width="1.7"/></svg><div class="lab" style="background:#b0aed6"></div><div class="num">4</div><svg class="ai" viewBox="0 0 21 25"><path d="M2.2 0.8 H14.6 L20.2 6.2 V22.6 Q20.2 24.2 18.6 24.2 H2.2 Q0.8 24.2 0.8 22.6 V2.4 Q0.8 0.8 2.2 0.8 Z" fill="#3c0b04" stroke="#ff9a00" stroke-width="1.5"/><text x="9.3" y="15" class="ait">Ai</text><text x="9.6" y="22.2" class="ais">AI</text></svg><div class="name">jacket-L</div></div>
<div class="row" style="top:270px;height:32px"><div class="cell c1"><svg class="eye" viewBox="0 0 18 12"><path d="M0.3 6 C3 1.6 6 0.4 9 0.4 C12 0.4 15 1.6 17.7 6 C15 10.4 12 11.6 9 11.6 C6 11.6 3 10.4 0.3 6 Z" fill="#c4c4c4"/><circle cx="9.3" cy="5.6" r="3.5" fill="#1b1b1b"/><circle cx="10.6" cy="4.4" r="1.1" fill="#8a8a8a"/></svg></div><div class="cell c3"></div><div class="cell c4"></div><svg class="chev" viewBox="0 0 12 12"><path d="M3.5 1 L8.5 6 L3.5 11" fill="none" stroke="#b4b4b4" stroke-width="1.7"/></svg><div class="lab" style="background:#b0aed6"></div><div class="num">5</div><svg class="ai" viewBox="0 0 21 25"><path d="M2.2 0.8 H14.6 L20.2 6.2 V22.6 Q20.2 24.2 18.6 24.2 H2.2 Q0.8 24.2 0.8 22.6 V2.4 Q0.8 0.8 2.2 0.8 Z" fill="#3c0b04" stroke="#ff9a00" stroke-width="1.5"/><text x="9.3" y="15" class="ait">Ai</text><text x="9.6" y="22.2" class="ais">AI</text></svg><div class="name">body</div></div>
<div class="row" style="top:302px;height:32px"><div class="cell c1"><svg class="eye" viewBox="0 0 18 12"><path d="M0.3 6 C3 1.6 6 0.4 9 0.4 C12 0.4 15 1.6 17.7 6 C15 10.4 12 11.6 9 11.6 C6 11.6 3 10.4 0.3 6 Z" fill="#c4c4c4"/><circle cx="9.3" cy="5.6" r="3.5" fill="#1b1b1b"/><circle cx="10.6" cy="4.4" r="1.1" fill="#8a8a8a"/></svg></div><div class="cell c3"></div><div class="cell c4"></div><svg class="chev" viewBox="0 0 12 12"><path d="M3.5 1 L8.5 6 L3.5 11" fill="none" stroke="#b4b4b4" stroke-width="1.7"/></svg><div class="lab" style="background:#b0aed6"></div><div class="num">6</div><svg class="ai" viewBox="0 0 21 25"><path d="M2.2 0.8 H14.6 L20.2 6.2 V22.6 Q20.2 24.2 18.6 24.2 H2.2 Q0.8 24.2 0.8 22.6 V2.4 Q0.8 0.8 2.2 0.8 Z" fill="#3c0b04" stroke="#ff9a00" stroke-width="1.5"/><text x="9.3" y="15" class="ait">Ai</text><text x="9.6" y="22.2" class="ais">AI</text></svg><div class="name">neck</div></div>
<div class="row" style="top:334px;height:32px"><div class="cell c1"><svg class="eye" viewBox="0 0 18 12"><path d="M0.3 6 C3 1.6 6 0.4 9 0.4 C12 0.4 15 1.6 17.7 6 C15 10.4 12 11.6 9 11.6 C6 11.6 3 10.4 0.3 6 Z" fill="#c4c4c4"/><circle cx="9.3" cy="5.6" r="3.5" fill="#1b1b1b"/><circle cx="10.6" cy="4.4" r="1.1" fill="#8a8a8a"/></svg></div><div class="cell c3"></div><div class="cell c4"></div><svg class="chev" viewBox="0 0 12 12"><path d="M3.5 1 L8.5 6 L3.5 11" fill="none" stroke="#b4b4b4" stroke-width="1.7"/></svg><div class="lab" style="background:#b0aed6"></div><div class="num">7</div><svg class="ai" viewBox="0 0 21 25"><path d="M2.2 0.8 H14.6 L20.2 6.2 V22.6 Q20.2 24.2 18.6 24.2 H2.2 Q0.8 24.2 0.8 22.6 V2.4 Q0.8 0.8 2.2 0.8 Z" fill="#3c0b04" stroke="#ff9a00" stroke-width="1.5"/><text x="9.3" y="15" class="ait">Ai</text><text x="9.6" y="22.2" class="ais">AI</text></svg><div class="name">shoes-R</div></div>
<div class="row" style="top:366px;height:32px"><div class="cell c1"><svg class="eye" viewBox="0 0 18 12"><path d="M0.3 6 C3 1.6 6 0.4 9 0.4 C12 0.4 15 1.6 17.7 6 C15 10.4 12 11.6 9 11.6 C6 11.6 3 10.4 0.3 6 Z" fill="#c4c4c4"/><circle cx="9.3" cy="5.6" r="3.5" fill="#1b1b1b"/><circle cx="10.6" cy="4.4" r="1.1" fill="#8a8a8a"/></svg></div><div class="cell c3"></div><div class="cell c4"></div><svg class="chev" viewBox="0 0 12 12"><path d="M3.5 1 L8.5 6 L3.5 11" fill="none" stroke="#b4b4b4" stroke-width="1.7"/></svg><div class="lab" style="background:#b0aed6"></div><div class="num">8</div><svg class="ai" viewBox="0 0 21 25"><path d="M2.2 0.8 H14.6 L20.2 6.2 V22.6 Q20.2 24.2 18.6 24.2 H2.2 Q0.8 24.2 0.8 22.6 V2.4 Q0.8 0.8 2.2 0.8 Z" fill="#3c0b04" stroke="#ff9a00" stroke-width="1.5"/><text x="9.3" y="15" class="ait">Ai</text><text x="9.6" y="22.2" class="ais">AI</text></svg><div class="name">bike</div></div>
<div class="row" style="top:398px;height:31px"><div class="cell c1"><svg class="eye" viewBox="0 0 18 12"><path d="M0.3 6 C3 1.6 6 0.4 9 0.4 C12 0.4 15 1.6 17.7 6 C15 10.4 12 11.6 9 11.6 C6 11.6 3 10.4 0.3 6 Z" fill="#c4c4c4"/><circle cx="9.3" cy="5.6" r="3.5" fill="#1b1b1b"/><circle cx="10.6" cy="4.4" r="1.1" fill="#8a8a8a"/></svg></div><div class="cell c3"></div><div class="cell c4"></div><svg class="chev" viewBox="0 0 12 12"><path d="M3.5 1 L8.5 6 L3.5 11" fill="none" stroke="#b4b4b4" stroke-width="1.7"/></svg><div class="lab" style="background:#b0aed6"></div><div class="num">9</div><svg class="ai" viewBox="0 0 21 25"><path d="M2.2 0.8 H14.6 L20.2 6.2 V22.6 Q20.2 24.2 18.6 24.2 H2.2 Q0.8 24.2 0.8 22.6 V2.4 Q0.8 0.8 2.2 0.8 Z" fill="#3c0b04" stroke="#ff9a00" stroke-width="1.5"/><text x="9.3" y="15" class="ait">Ai</text><text x="9.6" y="22.2" class="ais">AI</text></svg><div class="name">leg-L</div></div>
<div class="row" style="top:429px;height:32px"><div class="cell c1"><svg class="eye" viewBox="0 0 18 12"><path d="M0.3 6 C3 1.6 6 0.4 9 0.4 C12 0.4 15 1.6 17.7 6 C15 10.4 12 11.6 9 11.6 C6 11.6 3 10.4 0.3 6 Z" fill="#c4c4c4"/><circle cx="9.3" cy="5.6" r="3.5" fill="#1b1b1b"/><circle cx="10.6" cy="4.4" r="1.1" fill="#8a8a8a"/></svg></div><div class="cell c3"></div><div class="cell c4"></div><svg class="chev" viewBox="0 0 12 12"><path d="M3.5 1 L8.5 6 L3.5 11" fill="none" stroke="#b4b4b4" stroke-width="1.7"/></svg><div class="lab" style="background:#b0aed6"></div><div class="num">10</div><svg class="ai" viewBox="0 0 21 25"><path d="M2.2 0.8 H14.6 L20.2 6.2 V22.6 Q20.2 24.2 18.6 24.2 H2.2 Q0.8 24.2 0.8 22.6 V2.4 Q0.8 0.8 2.2 0.8 Z" fill="#3c0b04" stroke="#ff9a00" stroke-width="1.5"/><text x="9.3" y="15" class="ait">Ai</text><text x="9.6" y="22.2" class="ais">AI</text></svg><div class="name">leg-R</div></div>
<div class="row" style="top:461px;height:32px"><div class="cell c1"><svg class="eye" viewBox="0 0 18 12"><path d="M0.3 6 C3 1.6 6 0.4 9 0.4 C12 0.4 15 1.6 17.7 6 C15 10.4 12 11.6 9 11.6 C6 11.6 3 10.4 0.3 6 Z" fill="#c4c4c4"/><circle cx="9.3" cy="5.6" r="3.5" fill="#1b1b1b"/><circle cx="10.6" cy="4.4" r="1.1" fill="#8a8a8a"/></svg></div><div class="cell c3"></div><div class="cell c4"></div><svg class="chev" viewBox="0 0 12 12"><path d="M3.5 1 L8.5 6 L3.5 11" fill="none" stroke="#b4b4b4" stroke-width="1.7"/></svg><div class="lab" style="background:#b0aed6"></div><div class="num">11</div><svg class="ai" viewBox="0 0 21 25"><path d="M2.2 0.8 H14.6 L20.2 6.2 V22.6 Q20.2 24.2 18.6 24.2 H2.2 Q0.8 24.2 0.8 22.6 V2.4 Q0.8 0.8 2.2 0.8 Z" fill="#3c0b04" stroke="#ff9a00" stroke-width="1.5"/><text x="9.3" y="15" class="ait">Ai</text><text x="9.6" y="22.2" class="ais">AI</text></svg><div class="name">jacket-R</div></div>
<div class="row" style="top:493px;height:32px"><div class="cell c1"><svg class="eye" viewBox="0 0 18 12"><path d="M0.3 6 C3 1.6 6 0.4 9 0.4 C12 0.4 15 1.6 17.7 6 C15 10.4 12 11.6 9 11.6 C6 11.6 3 10.4 0.3 6 Z" fill="#c4c4c4"/><circle cx="9.3" cy="5.6" r="3.5" fill="#1b1b1b"/><circle cx="10.6" cy="4.4" r="1.1" fill="#8a8a8a"/></svg></div><div class="cell c3"></div><div class="cell c4"></div><svg class="chev" viewBox="0 0 12 12"><path d="M3.5 1 L8.5 6 L3.5 11" fill="none" stroke="#b4b4b4" stroke-width="1.7"/></svg><div class="lab" style="background:#b0aed6"></div><div class="num">12</div><svg class="ai" viewBox="0 0 21 25"><path d="M2.2 0.8 H14.6 L20.2 6.2 V22.6 Q20.2 24.2 18.6 24.2 H2.2 Q0.8 24.2 0.8 22.6 V2.4 Q0.8 0.8 2.2 0.8 Z" fill="#3c0b04" stroke="#ff9a00" stroke-width="1.5"/><text x="9.3" y="15" class="ait">Ai</text><text x="9.6" y="22.2" class="ais">AI</text></svg><div class="name">hand-R</div></div>
<div class="row" style="top:525px;height:32px"><div class="cell c1"><svg class="eye" viewBox="0 0 18 12"><path d="M0.3 6 C3 1.6 6 0.4 9 0.4 C12 0.4 15 1.6 17.7 6 C15 10.4 12 11.6 9 11.6 C6 11.6 3 10.4 0.3 6 Z" fill="#c4c4c4"/><circle cx="9.3" cy="5.6" r="3.5" fill="#1b1b1b"/><circle cx="10.6" cy="4.4" r="1.1" fill="#8a8a8a"/></svg></div><div class="cell c3"></div><div class="cell c4"></div><svg class="chev" viewBox="0 0 12 12"><path d="M3.5 1 L8.5 6 L3.5 11" fill="none" stroke="#b4b4b4" stroke-width="1.7"/></svg><div class="lab" style="background:#b0aed6"></div><div class="num">13</div><svg class="ai" viewBox="0 0 21 25"><path d="M2.2 0.8 H14.6 L20.2 6.2 V22.6 Q20.2 24.2 18.6 24.2 H2.2 Q0.8 24.2 0.8 22.6 V2.4 Q0.8 0.8 2.2 0.8 Z" fill="#3c0b04" stroke="#ff9a00" stroke-width="1.5"/><text x="9.3" y="15" class="ait">Ai</text><text x="9.6" y="22.2" class="ais">AI</text></svg><div class="name">arm-R</div></div>
<div class="row" style="top:557px;height:32px"><div class="cell c1"><svg class="eye" viewBox="0 0 18 12"><path d="M0.3 6 C3 1.6 6 0.4 9 0.4 C12 0.4 15 1.6 17.7 6 C15 10.4 12 11.6 9 11.6 C6 11.6 3 10.4 0.3 6 Z" fill="#c4c4c4"/><circle cx="9.3" cy="5.6" r="3.5" fill="#1b1b1b"/><circle cx="10.6" cy="4.4" r="1.1" fill="#8a8a8a"/></svg></div><div class="cell c3"></div><div class="cell c4"></div><svg class="chev" viewBox="0 0 12 12"><path d="M3.5 1 L8.5 6 L3.5 11" fill="none" stroke="#b4b4b4" stroke-width="1.7"/></svg><div class="lab" style="background:#b0aed6"></div><div class="num">14</div><svg class="ai" viewBox="0 0 21 25"><path d="M2.2 0.8 H14.6 L20.2 6.2 V22.6 Q20.2 24.2 18.6 24.2 H2.2 Q0.8 24.2 0.8 22.6 V2.4 Q0.8 0.8 2.2 0.8 Z" fill="#3c0b04" stroke="#ff9a00" stroke-width="1.5"/><text x="9.3" y="15" class="ait">Ai</text><text x="9.6" y="22.2" class="ais">AI</text></svg><div class="name">shoes-L</div></div>
<div class="row" style="top:589px;height:32px"><div class="cell c1"><svg class="eye" viewBox="0 0 18 12"><path d="M0.3 6 C3 1.6 6 0.4 9 0.4 C12 0.4 15 1.6 17.7 6 C15 10.4 12 11.6 9 11.6 C6 11.6 3 10.4 0.3 6 Z" fill="#c4c4c4"/><circle cx="9.3" cy="5.6" r="3.5" fill="#1b1b1b"/><circle cx="10.6" cy="4.4" r="1.1" fill="#8a8a8a"/></svg></div><div class="cell c3"></div><div class="cell c4"></div><svg class="chev" viewBox="0 0 12 12"><path d="M3.5 1 L8.5 6 L3.5 11" fill="none" stroke="#b4b4b4" stroke-width="1.7"/></svg><div class="lab" style="background:#b0aed6"></div><div class="num">15</div><svg class="ai" viewBox="0 0 21 25"><path d="M2.2 0.8 H14.6 L20.2 6.2 V22.6 Q20.2 24.2 18.6 24.2 H2.2 Q0.8 24.2 0.8 22.6 V2.4 Q0.8 0.8 2.2 0.8 Z" fill="#3c0b04" stroke="#ff9a00" stroke-width="1.5"/><text x="9.3" y="15" class="ait">Ai</text><text x="9.6" y="22.2" class="ais">AI</text></svg><div class="name">ankle-R</div></div>
<div class="row" style="top:621px;height:32px"><div class="cell c1"><svg class="eye" viewBox="0 0 18 12"><path d="M0.3 6 C3 1.6 6 0.4 9 0.4 C12 0.4 15 1.6 17.7 6 C15 10.4 12 11.6 9 11.6 C6 11.6 3 10.4 0.3 6 Z" fill="#c4c4c4"/><circle cx="9.3" cy="5.6" r="3.5" fill="#1b1b1b"/><circle cx="10.6" cy="4.4" r="1.1" fill="#8a8a8a"/></svg></div><div class="cell c3"></div><div class="cell c4"></div><svg class="chev" viewBox="0 0 12 12"><path d="M3.5 1 L8.5 6 L3.5 11" fill="none" stroke="#b4b4b4" stroke-width="1.7"/></svg><div class="lab" style="background:#b0aed6"></div><div class="num">16</div><svg class="ai" viewBox="0 0 21 25"><path d="M2.2 0.8 H14.6 L20.2 6.2 V22.6 Q20.2 24.2 18.6 24.2 H2.2 Q0.8 24.2 0.8 22.6 V2.4 Q0.8 0.8 2.2 0.8 Z" fill="#3c0b04" stroke="#ff9a00" stroke-width="1.5"/><text x="9.3" y="15" class="ait">Ai</text><text x="9.6" y="22.2" class="ais">AI</text></svg><div class="name">ankle-L</div></div>
<div class="row" style="top:653px;height:32px;box-shadow:none"><div class="cell c1"><svg class="eye" viewBox="0 0 18 12"><path d="M0.3 6 C3 1.6 6 0.4 9 0.4 C12 0.4 15 1.6 17.7 6 C15 10.4 12 11.6 9 11.6 C6 11.6 3 10.4 0.3 6 Z" fill="#c4c4c4"/><circle cx="9.3" cy="5.6" r="3.5" fill="#1b1b1b"/><circle cx="10.6" cy="4.4" r="1.1" fill="#8a8a8a"/></svg></div><div class="cell c3"></div><div class="cell c4"></div><svg class="chev" style="left:124px;top:11px" viewBox="0 0 12 12"><path d="M0.4 3 L6 8.8 L11.6 3" fill="none" stroke="#b4b4b4" stroke-width="1.7"/></svg><div class="lab" style="background:#bb383a"></div><div class="num">17</div><div class="nullico"></div><div class="name">[ヌル 1]</div></div>
<div class="prop"><svg class="sw" viewBox="0 0 20 24"><circle cx="9.8" cy="14" r="8.6" fill="none" stroke="#c4c4c4" stroke-width="1.8"/><path d="M6.3 2.2h7M9.8 2.2v3.4M2.2 5.4l1.8 1.8" stroke="#c4c4c4" stroke-width="1.8" fill="none"/></svg><div class="pname">回転</div></div>
<div id="empty"></div>
<div class="bline"></div><div class="bbar"></div>
<div class="bbtn" style="left:10px"></div><div class="bbtn" style="left:41px"></div>
<svg class="abs" style="left:14px;top:974px" width="22" height="21" viewBox="0 0 22 21"><g fill="#1e1e1e" stroke="#34a0f6" stroke-width="1.6"><rect x="0.8" y="0.8" width="10.2" height="10.2"/><rect x="4.2" y="4" width="10.6" height="10.2"/><rect x="7.8" y="7" width="10.8" height="10.8"/></g><circle cx="13.2" cy="12.5" r="1.8" fill="#34a0f6"/></svg>
<svg class="abs" style="left:45px;top:973px" width="22" height="21" viewBox="0 0 22 21"><g fill="none" stroke="#34a0f6" stroke-width="1.6"><circle cx="8.3" cy="7.9" r="6.5"/><rect x="8.9" y="8" width="10.4" height="10"/></g><path d="M8.9 8 H14.8 A6.5 6.5 0 0 1 8.9 14.4 Z" fill="#34a0f6"/></svg>
<svg class="abs" style="left:77px;top:973px" width="22" height="21" viewBox="0 0 22 21"><rect x="6.6" y="0.8" width="7.6" height="17.6" fill="#6a6a6a"/><path d="M8.2 0.9 Q5.3 0.9 5.3 3.6 V7 L1.6 9.6 L5.3 12.2 V15.6 Q5.3 18.3 8.2 18.3 M12.6 0.9 Q15.5 0.9 15.5 3.6 V7 L19.2 9.6 L15.5 12.2 V15.6 Q15.5 18.3 12.6 18.3" fill="none" stroke="#c6c6c6" stroke-width="2.5" stroke-linejoin="miter"/></svg>
<svg class="abs" style="left:108px;top:974px" width="24" height="20" viewBox="0 0 24 20"><circle cx="7.7" cy="7.8" r="5.7" fill="#ababab"/><path d="M0.7 14.8 H19" stroke="#ababab" stroke-width="2.8" fill="none"/><path d="M12.4 14.8 L15.6 9.4 L18.2 9.4 L19.4 14.8 Z" fill="#ababab"/><path d="M16.4 10.6 L16 5.2 M17.6 10.6 L20.4 5.4" stroke="#ababab" stroke-width="1.2" fill="none"/><circle cx="16" cy="4.8" r="1.5" fill="#ababab"/><circle cx="20.6" cy="5" r="1.5" fill="#ababab"/></svg>
<div class="btxt">フレームレンダリング時間</div>
<div class="bms">58ms</div>
</div>
</body></html>
